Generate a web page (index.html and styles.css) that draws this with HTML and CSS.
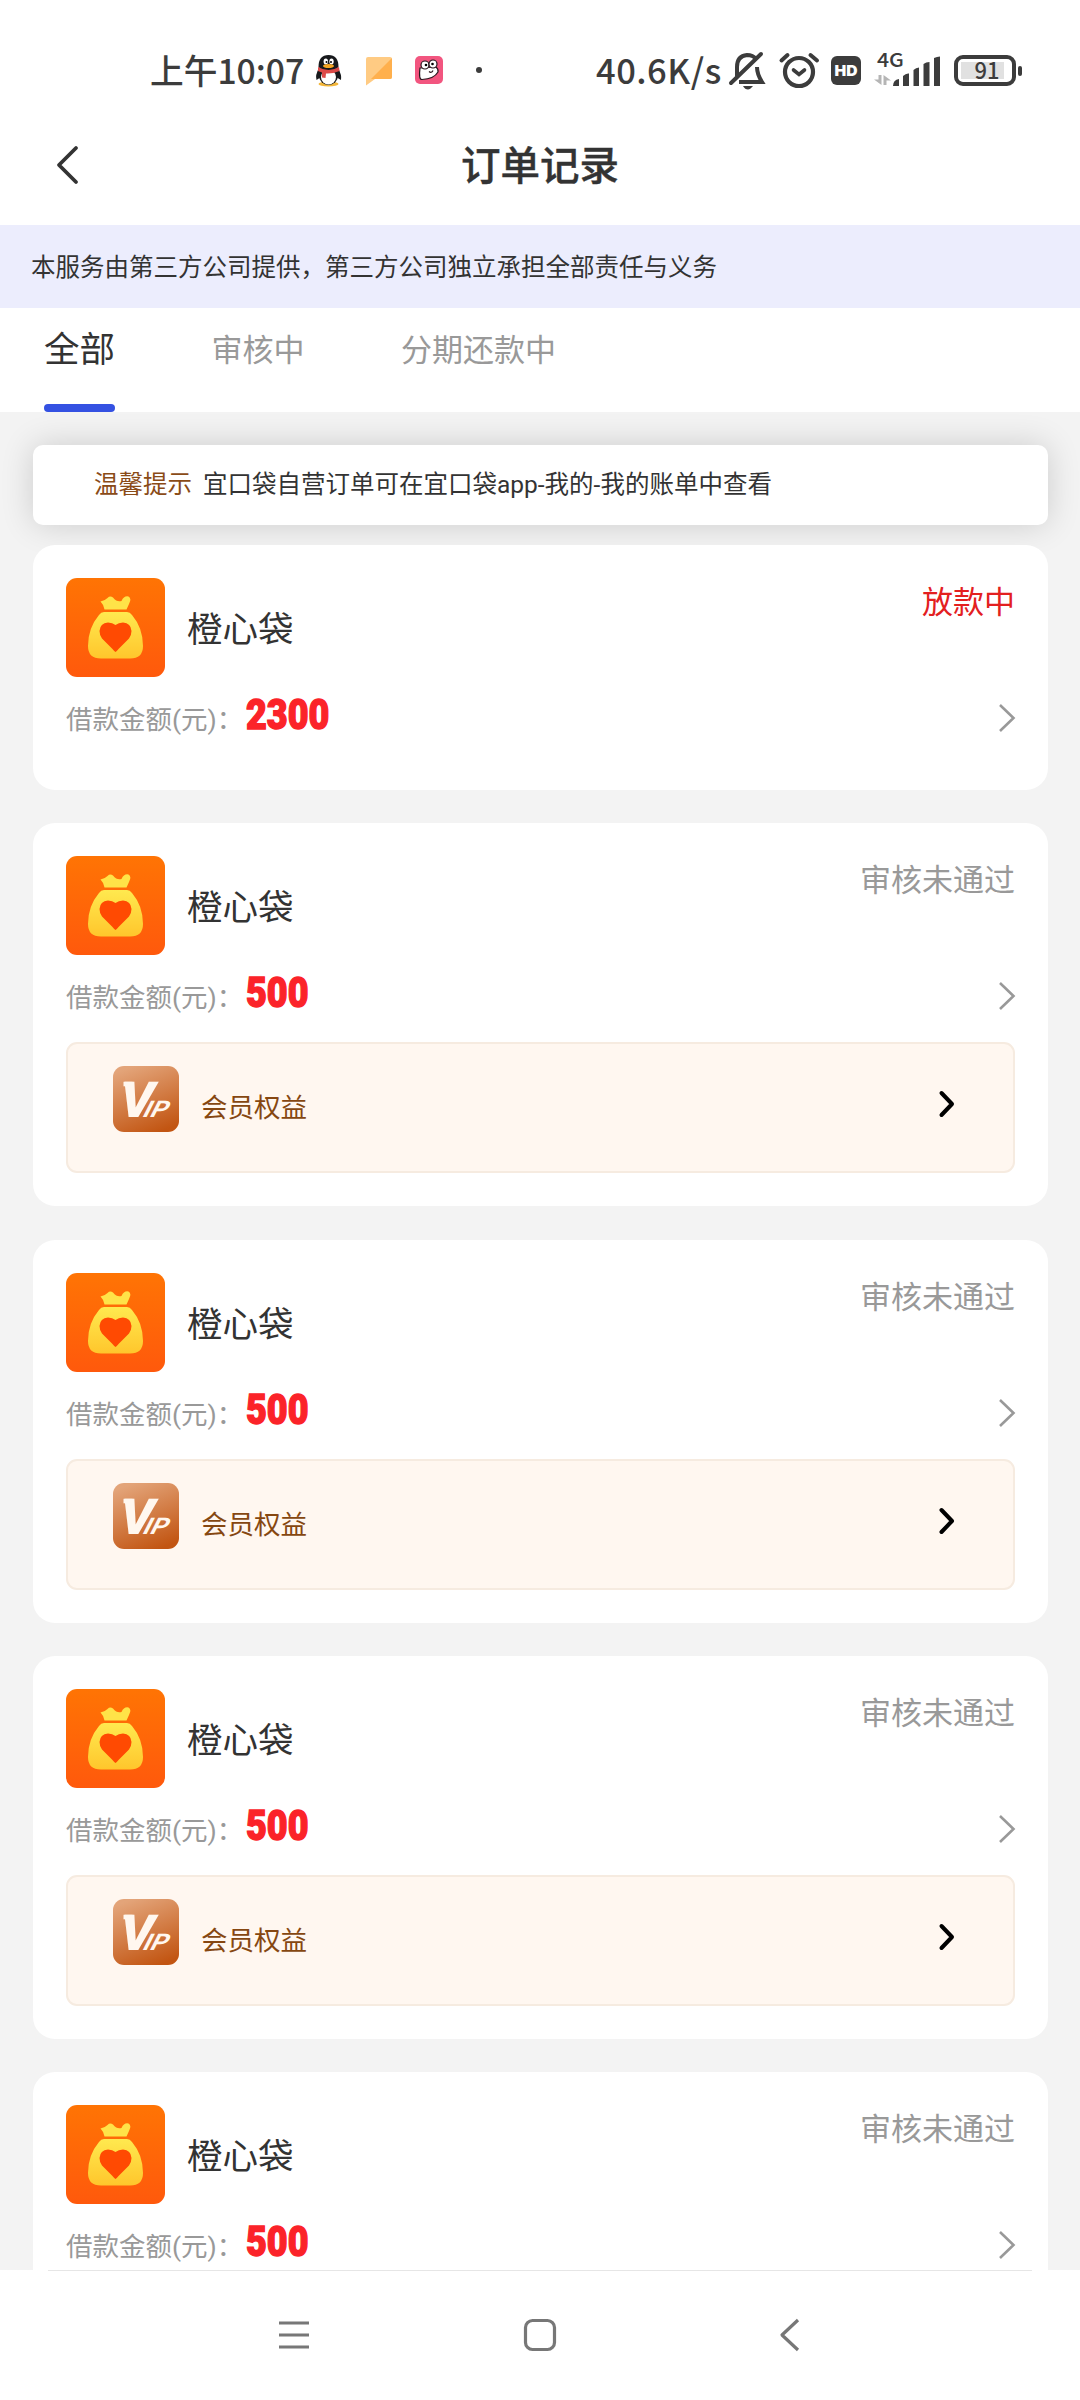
FILE: index.html
```html
<!DOCTYPE html>
<html lang="zh-CN">
<head>
<meta charset="utf-8">
<title>订单记录</title>
<link rel="stylesheet" href="styles.css">
</head>
<body>
<svg class="defs" width="0" height="0" aria-hidden="true">
  <defs>
    <linearGradient id="g-orange" x1="0" y1="0" x2="0" y2="1"><stop offset="0" stop-color="#ff7404"/><stop offset="1" stop-color="#ff590c"/></linearGradient>
    <linearGradient id="g-bag" x1="0" y1="0" x2="0" y2="1"><stop offset="0" stop-color="#ffe94f"/><stop offset="1" stop-color="#ffc62c"/></linearGradient>
    <linearGradient id="g-vip" x1=".3" y1="0" x2=".7" y2="1"><stop offset="0" stop-color="#e3a479"/><stop offset="1" stop-color="#c25512"/></linearGradient>
  </defs>
  <symbol id="logo" viewBox="0 0 99 99">
    <rect width="99" height="99" rx="11" fill="url(#g-orange)"/>
    <path d="M34.500 23.500Q38.500 23 41.500 20Q44 17.500 47 19.500Q51 24.500 55.500 23Q58 17.500 62.500 18.500Q66 20.500 63 26L60.500 31.500H38.500Q38 27 34.500 23.500Z" fill="#ffe348"/>
    <path d="M38 34H61Q64 34 66 37Q77 50 77 68Q77 80.500 64 80.500H35Q22 80.500 22 68Q22 50 33 37Q35 34 38 34Z" fill="url(#g-bag)"/>
    <path d="M49.500 74Q48 73 46 70.500L36 60.500Q33.500 57 33.500 53Q34 45 42 44.500Q46.500 44.500 49.500 47Q52.500 44.500 57 44.500Q65 45 65.500 53Q65.500 57 63 60.500L53 70.500Q51 73 49.500 74Z" fill="#ff4a02"/>
  </symbol>
  <symbol id="vip" viewBox="0 0 66 66">
    <rect width="66" height="66" rx="11" fill="url(#g-vip)"/>
    <rect x="10.500" y="15.800" width="9" height="4.500" fill="#fff7ef"/>
    <text class="vip-v" transform="translate(3.500 51) skewX(-13)" textLength="34" lengthAdjust="spacingAndGlyphs">V</text>
    <text class="vip-ip" transform="translate(28 51) skewX(-27)" textLength="24" lengthAdjust="spacingAndGlyphs">IP</text>
  </symbol>
  <symbol id="more" viewBox="0 0 18 30"><path d="M2 2L15.500 15L2 28" fill="none" stroke="#999" stroke-width="2.600"/></symbol>
  <symbol id="go" viewBox="0 0 18 28"><path d="M3.500 3L14 14L3.500 25" fill="none" stroke="#000" stroke-width="4" stroke-linecap="round" stroke-linejoin="round"/></symbol>
</svg>

<header class="status-bar">
  <span class="clock">上午10:07</span>
  <svg class="notices" width="170" height="36" viewBox="0 0 170 36">
    <ellipse cx="13.500" cy="31" rx="10" ry="2.500" fill="#f3b63a"/>
    <path d="M4 15Q0 22 1.500 27L6 24L21 24L26 27Q27 22 23 15Z" fill="#17191c"/>
    <ellipse cx="13.500" cy="23" rx="9.500" ry="9" fill="#17191c"/>
    <ellipse cx="13.500" cy="24" rx="7.500" ry="7.500" fill="#fff"/>
    <path d="M3.500 14Q3.500 2 13.500 2Q23.500 2 23.500 14Q20 18 13.500 18Q7 18 3.500 14Z" fill="#17191c"/>
    <ellipse cx="10.800" cy="8.500" rx="2.200" ry="3" fill="#fff"/><ellipse cx="16.500" cy="8.500" rx="2.200" ry="3" fill="#fff"/>
    <circle cx="11.500" cy="9" r="1"/><circle cx="16" cy="9" r="1"/>
    <ellipse cx="13.500" cy="13" rx="5.500" ry="2" fill="#f5a623"/>
    <path d="M3 14Q13.500 20 24 14L24.500 18Q17 21 11 20.500L10.500 25L7 24.500V19.500L3 18Z" fill="#dc4a48"/>
    <path d="M53 4H75Q77 4 77 6V24Q77 26 75 26H60L51 32.500V6Q51 4 53 4Z" fill="#ffcb83"/><path d="M77 5V24Q77 26 75 26H56Z" fill="#ffb04d"/>
    <rect x="100" y="3" width="28" height="28" rx="5" fill="#f2557f"/>
    <path d="M105 15Q103.500 27 107 26.500Q119 26 123 19Q123.500 16 121 14Z" fill="#fff" stroke="#29181e" stroke-width="1.200"/>
    <circle cx="110" cy="12" r="4" fill="#fff" stroke="#29181e" stroke-width="1.200"/><circle cx="118" cy="11" r="4" fill="#fff" stroke="#29181e" stroke-width="1.200"/>
    <circle cx="111" cy="12" r="1.300"/><circle cx="117.500" cy="11" r="1.300"/>
    <path d="M114 18.500Q116.500 20.500 118 17.500" fill="none" stroke="#29181e" stroke-width="1.200"/>
    <circle cx="164" cy="17" r="3" fill="#3c3c3c"/>
  </svg>
  <span class="speed">40.6K/s</span>
  <svg class="signals" width="296" height="42" viewBox="0 0 296 42" fill="none" stroke="#3c3c3c">
    <path d="M10 27V17Q10 6 20 5Q26 5 29 9M30 17Q30 24 35 32H12" stroke-width="4"/>
    <path d="M4 33L34 4" stroke-width="4" stroke-linecap="round"/><path d="M16 36H26Q23 39.500 21 39.500Q18 39.500 16 36Z" fill="#3c3c3c" stroke="none"/>
    <circle cx="72" cy="22" r="14" stroke-width="4.200"/><path d="M66.500 20L72 24.500L77.500 20" stroke-width="3.600" stroke-linecap="round"/><path d="M54.500 10.500L60.500 5M90 10.500L83.500 5" stroke-width="4" stroke-linecap="round"/>
    <rect x="104" y="6" width="30" height="29" rx="6" fill="#3c3c3c" stroke="none"/>
    <text class="hd" x="107.500" y="26" textLength="23" lengthAdjust="spacingAndGlyphs">HD</text>
    <text class="net" x="150" y="16.500" textLength="27" lengthAdjust="spacingAndGlyphs">4G</text>
    <g fill="#b5b5b5" stroke="none"><path d="M151.500 25H154.500V35L147 29.500H151.500Z"/><path d="M159.500 35H156.500V25L164 30.500H159.500Z"/></g>
    <path d="M166 36Q166 30 172 29V36ZM176 36V26Q179 23 182 23.500V36ZM186.500 36V20Q189 17.500 192 17.500V36ZM196.500 36V14Q199 12 202.500 12V36ZM207 36V8Q210 6.500 213 6.500V36Z" fill="#3c3c3c" stroke="none"/>
    <rect x="229" y="7" width="58" height="27" rx="7" stroke-width="4"/><rect x="234" y="12" width="43" height="17" fill="#e1e1e1" stroke="none"/>
    <path d="M293 18V24" stroke-width="4" stroke-linecap="round"/>
    <text class="battery" x="247.500" y="28.500" textLength="25" lengthAdjust="spacingAndGlyphs">91</text>
  </svg>
</header>

<nav class="title-bar">
  <svg width="24" height="40" viewBox="0 0 24 40"><path d="M21 3L4 20L21 37" fill="none" stroke="#333" stroke-width="3.800" stroke-linecap="round" stroke-linejoin="round"/></svg>
  <h1>订单记录</h1>
</nav>
<p class="disclaimer">本服务由第三方公司提供，第三方公司独立承担全部责任与义务</p>
<div class="tabs">
  <span class="tab active">全部</span><span class="tab">审核中</span><span class="tab">分期还款中</span>
</div>

<main class="content">
  <div class="tip"><span class="tip-label">温馨提示</span><span>宜口袋自营订单可在宜口袋app-我的-我的账单中查看</span></div>

  <article class="card plain">
    <div class="top"><svg class="logo"><use href="#logo"/></svg><span class="name">橙心袋</span><span class="state paying">放款中</span></div>
    <div class="amount"><span class="label">借款金额(元)：</span><span class="money">2300</span><svg class="more"><use href="#more"/></svg></div>
  </article>

  <article class="card">
    <div class="top"><svg class="logo"><use href="#logo"/></svg><span class="name">橙心袋</span><span class="state">审核未通过</span></div>
    <div class="amount"><span class="label">借款金额(元)：</span><span class="money">500</span><svg class="more"><use href="#more"/></svg></div>
    <div class="member"><svg class="vip"><use href="#vip"/></svg><span class="benefit">会员权益</span><svg class="go"><use href="#go"/></svg></div>
  </article>

  <article class="card">
    <div class="top"><svg class="logo"><use href="#logo"/></svg><span class="name">橙心袋</span><span class="state">审核未通过</span></div>
    <div class="amount"><span class="label">借款金额(元)：</span><span class="money">500</span><svg class="more"><use href="#more"/></svg></div>
    <div class="member"><svg class="vip"><use href="#vip"/></svg><span class="benefit">会员权益</span><svg class="go"><use href="#go"/></svg></div>
  </article>

  <article class="card">
    <div class="top"><svg class="logo"><use href="#logo"/></svg><span class="name">橙心袋</span><span class="state">审核未通过</span></div>
    <div class="amount"><span class="label">借款金额(元)：</span><span class="money">500</span><svg class="more"><use href="#more"/></svg></div>
    <div class="member"><svg class="vip"><use href="#vip"/></svg><span class="benefit">会员权益</span><svg class="go"><use href="#go"/></svg></div>
  </article>

  <article class="card">
    <div class="top"><svg class="logo"><use href="#logo"/></svg><span class="name">橙心袋</span><span class="state">审核未通过</span></div>
    <div class="amount"><span class="label">借款金额(元)：</span><span class="money">500</span><svg class="more"><use href="#more"/></svg></div>
  </article>
</main>

<footer class="system-nav">
  <svg width="34" height="36" viewBox="0 0 34 36"><path d="M2 6H32M2 18H32M2 30H32" stroke="#777" stroke-width="3"/></svg>
  <svg width="36" height="36" viewBox="0 0 36 36"><rect x="3.500" y="3.500" width="29" height="29" rx="7" fill="none" stroke="#777" stroke-width="3.200"/></svg>
  <svg width="24" height="36" viewBox="0 0 24 36"><path d="M20 3L4 18L20 33" fill="none" stroke="#777" stroke-width="3.200" stroke-linejoin="round"/></svg>
</footer>
</body>
</html>
```
FILE: styles.css
```css
* { box-sizing: border-box; }
body {
  margin: 0;
  width: 1080px;
  height: 2400px;
  overflow: hidden;
  display: flex;
  flex-direction: column;
  background: #fff;
  color: #333;
  font-family: Roboto, "Noto Sans CJK SC", sans-serif;
}
svg { display: block; flex: none; }
.defs { position: absolute; }
span { white-space: nowrap; }

.status-bar {
  height: 125px;
  flex: none;
  display: flex;
  align-items: flex-start;
  padding: 50px 0 0 150px;
  color: #3c3c3c;
  font-family: "Noto Sans CJK SC", sans-serif;
  font-weight: 500;
  font-size: 33.7px;
  line-height: 39px;
}
.clock { width: 165px; }
.notices { margin-top: 3px; }
.speed { width: 131px; margin-left: 111px; font-size: 34.5px; line-height: 39px; letter-spacing: .5px; }
.hd { fill: #fff; stroke: none; font: 900 15px Inter, sans-serif; }
.net { fill: #3c3c3c; stroke: none; font: 500 19px "Noto Sans CJK SC", sans-serif; }
.battery { fill: #3c3c3c; stroke: none; font: 500 22.5px "Noto Sans CJK SC", sans-serif; }

.title-bar {
  height: 100px;
  flex: none;
  display: grid;
  grid-template-columns: 1fr auto 1fr;
  align-items: start;
  padding: 20px 55px 0;
}
.title-bar h1 {
  margin: 0;
  font-size: 39.5px;
  line-height: 43px;
  font-weight: 500;
  -webkit-text-stroke: .4px #333;
}

.disclaimer {
  margin: 0;
  height: 83px;
  flex: none;
  padding: 1px 0 0 31px;
  background: #ecedfd;
  font-size: 24.5px;
  line-height: 83px;
}

.tabs { height: 104px; flex: none; display: flex; padding-left: 44px; font-size: 31px; line-height: 86px; color: #999; }
.tab { margin-right: 96.5px; }
.tab.active { font-size: 35.5px; line-height: 84px; color: #333; display: flex; flex-direction: column; justify-content: space-between; }
.tab.active::after { content: ""; height: 8px; border-radius: 4px; background: #3451e2; }

.content {
  height: 1858px;
  flex: none;
  overflow: hidden;
  display: flex;
  flex-direction: column;
  background: #f3f3f3;
  padding: 33px 32px 0 33px;
}
.tip {
  height: 80px;
  flex: none;
  margin-bottom: 20px;
  padding-left: 61px;
  display: flex;
  gap: 11px;
  border-radius: 10px;
  background: #fff;
  box-shadow: 0 0 33px rgba(0, 0, 0, .16);
  font-size: 24.5px;
  line-height: 80px;
}
.tip-label { color: #8a4b17; }

.card {
  height: 383px;
  flex: none;
  margin-bottom: 33.25px;
  padding: 33px 33px 0;
  border-radius: 22px;
  background: #fff;
}
.card.plain { height: 245px; }
.top { height: 99px; display: flex; align-items: flex-start; }
.logo { width: 99px; height: 99px; }
.name { margin-left: 22px; font-size: 35.5px; line-height: 104px; }
.state { margin-left: auto; font-size: 31px; line-height: 50px; color: #999; }
.paying { color: #e3201f; }
.amount { height: 87px; display: flex; }
.label { width: 179.5px; font-size: 26.5px; line-height: 86px; color: #999; }
.money {
  font-size: 42px;
  line-height: 75px;
  font-weight: 900;
  color: #fb2329;
  -webkit-text-stroke: 1.4px #fb2329;
  transform: scaleX(.855);
  transform-origin: 0 50%;
}
.more { width: 18px; height: 30px; margin: 26px -1px 0 auto; }
.member {
  height: 131px;
  display: flex;
  border: 2px solid #f6ebe0;
  border-radius: 11px;
  background: #fff7f0;
}
.vip { width: 66px; height: 66px; margin: 22px 22px 0 45px; }
.vip-v { fill: #fff7ef; font: 900 49.500px Roboto, sans-serif; }
.vip-ip { fill: #fff7ef; font: 700 23px Roboto, sans-serif; }
.benefit { font-size: 26.5px; line-height: 128px; color: #864711; }
.go { width: 18px; height: 28px; margin: 46px 57px 0 auto; }

.system-nav {
  flex: 1;
  display: flex;
  align-items: flex-start;
  padding: 47px 0 0 277px;
  position: relative;
}
.system-nav::before { content: ""; position: absolute; top: 0; left: 48px; right: 48px; height: 1px; background: #e6e6e6; }
.system-nav svg:nth-child(2) { margin-left: 211px; }
.system-nav svg:nth-child(3) { margin-left: 220px; }
```
